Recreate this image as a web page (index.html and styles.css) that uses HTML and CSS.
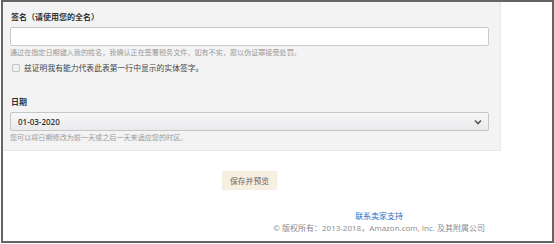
FILE: index.html
```html
<!DOCTYPE html>
<html lang="zh-CN">
<head>
    <meta charset="UTF-8">
    <meta name="viewport" content="width=device-width, initial-scale=1.0">
    <title>签名</title>
    <link rel="stylesheet" href="styles.css">
</head>
<body>

    <div class="frame">
        <div class="panel">
            <label class="field-label" for="signature">签名（请使用您的全名）</label>
            <input type="text" id="signature" class="text-input">
            <p class="hint">通过在指定日期键入我的姓名，我确认正在签署税务文件，如有不实，愿以伪证罪接受处罚。</p>

            <label class="check-row">
                <span class="check-box"></span>
                <span>兹证明我有能力代表此表第一行中显示的实体签字。</span>
            </label>

            <label class="field-label date-label" for="date">日期</label>
            <div class="select-box" id="date">
                <span>01-03-2020</span>
                <svg class="chevron" width="8" height="6" viewBox="0 0 8 6">
                    <path d="M1 1.5 L4 4.5 L7 1.5" fill="none" stroke="#555" stroke-width="1.6"/>
                </svg>
            </div>
            <p class="hint">您可以将日期修改为前一天或之后一天来适应您的时区。</p>
        </div>

        <button class="save-btn">保存并预览</button>

        <div class="footer">
            <div class="footer-inner">
                <a href="#" class="support-link">联系卖家支持</a>
                <p class="copyright">© 版权所有：2013-2018，Amazon.com, Inc. 及其附属公司</p>
            </div>
        </div>
    </div>

</body>
</html>
```

FILE: styles.css
```css
* {
    margin: 0;
    padding: 0;
    box-sizing: border-box;
}

body {
    font-family: 'Open Sans', 'Noto Sans CJK SC', sans-serif;
    background: #fff;
    color: #333;
    width: 554px;
    height: 244px;
    overflow: hidden;
}

.frame {
    margin-left: 1px;
    width: 553px;
    height: 243px;
    border: 2px solid #656565;
    background: #fff;
}

.panel {
    width: 498px;
    background-color: #f3f3f3;
    border-right: 1px solid #e8e8e8;
    border-bottom: 1px solid #e8e8e8;
    padding: 10px 11px 8px 7px;
}

.field-label {
    display: block;
    font-size: 8px;
    line-height: 10px;
    font-weight: bold;
    color: #333;
    padding-left: 1px;
    margin-bottom: 5px;
}

.date-label {
    margin-top: 24px;
}

.text-input {
    display: block;
    width: 100%;
    height: 19px;
    border: 1px solid #c9c9c9;
    border-radius: 2px;
    background: #fff;
}

.hint {
    font-size: 7.1px;
    line-height: 10px;
    color: #9a9a9a;
    margin-top: 1px;
}

.check-row {
    display: flex;
    align-items: center;
    gap: 4px;
    font-size: 7.8px;
    line-height: 10px;
    color: #444;
    margin-top: 6px;
    padding-left: 2px;
}

.check-box {
    width: 8px;
    height: 8px;
    border: 1px solid #c4c4c4;
    border-radius: 1px;
    background: #f0f0f0;
}

.select-box {
    display: flex;
    align-items: center;
    justify-content: space-between;
    height: 19px;
    padding: 0 6px 0 7px;
    font-size: 8px;
    font-weight: 600;
    color: #333;
    border: 1px solid #c6c6c6;
    border-radius: 2px;
    background: linear-gradient(#f7f7f8, #e9eaec);
}

.save-btn {
    display: block;
    margin: 20px 0 0 219px;
    width: 55px;
    height: 19px;
    border: none;
    border-radius: 2px;
    background: #f6efe2;
    font-family: inherit;
    font-size: 7.8px;
    color: #666;
    box-shadow: 0 0 1px rgba(0, 0, 0, 0.15);
}

.footer {
    display: flex;
    justify-content: flex-end;
    margin-top: 21px;
    padding-right: 67px;
}

.footer-inner {
    text-align: center;
}

.support-link {
    display: block;
    font-size: 8px;
    line-height: 10px;
    color: #2b6ec0;
    text-decoration: none;
}

.copyright {
    font-size: 8px;
    line-height: 10px;
    color: #8a8a8a;
    margin-top: 2px;
}
```
